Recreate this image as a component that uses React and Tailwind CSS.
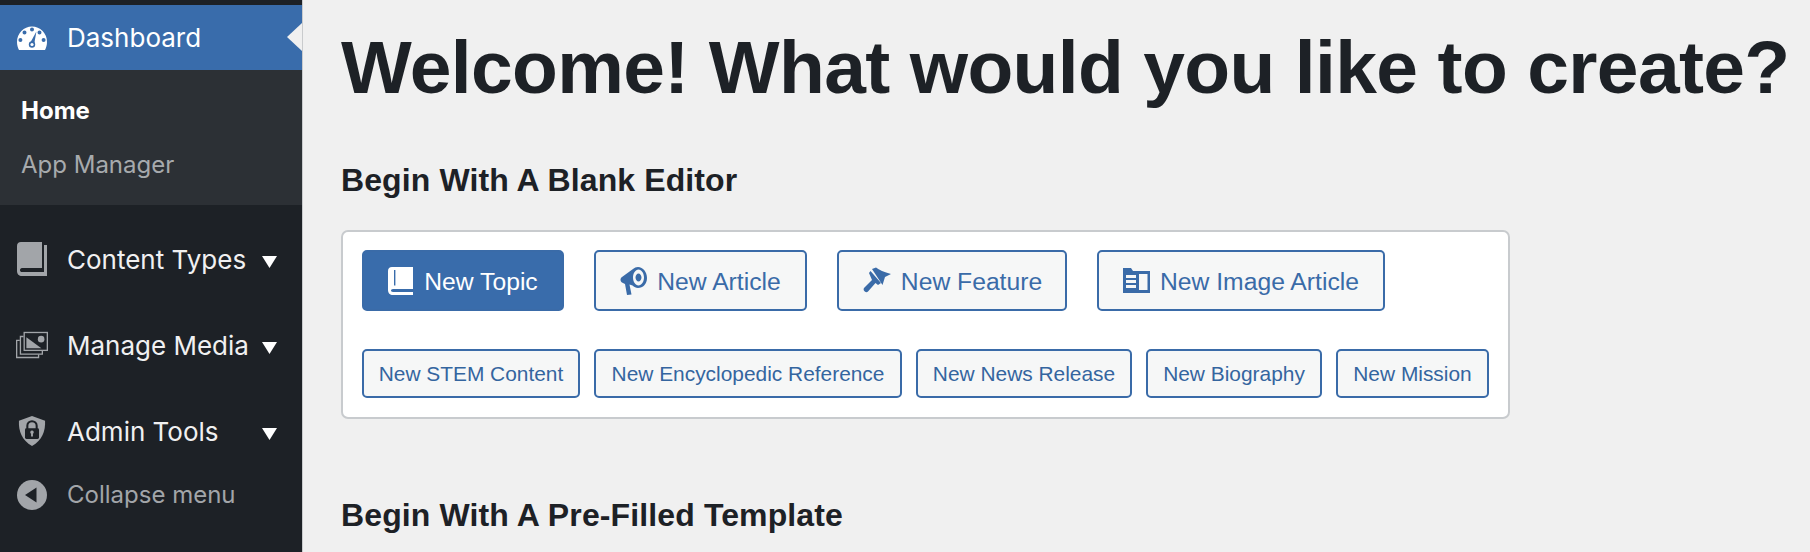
import React from "react";

const Gauge = () => (
  <svg viewBox="0 0 30 24" className="w-[30px] h-[24px] text-white">
    <path fill="currentColor" fillRule="evenodd" d="M0 16A15 15.5 0 0 1 30 16C30 19 29.2 21.6 28 24H2C.8 21.600 0 19 0 16ZM15 1.600a2 2 0 1 0 0 4 2 2 0 0 0 0-4ZM7.500 4.600a2 2 0 1 0 0 4 2 2 0 0 0 0-4ZM22.500 4.600a2 2 0 1 0 0 4 2 2 0 0 0 0-4ZM3.400 12a2 2 0 1 0 0 4 2 2 0 0 0 0-4ZM26.600 12a2 2 0 1 0 0 4 2 2 0 0 0 0-4Z" />
    <path d="M13.400 16.500 19.400 5.500 17.200 18Z" fill="#396cab" />
    <circle cx="15" cy="18.500" r="3.200" fill="#396cab" />
    <circle cx="15" cy="18.500" r="1.600" fill="#fff" />
  </svg>
);

const BookSide = () => (
  <svg viewBox="0 0 30 34" className="w-[30px] h-[34px] text-[#a2a5a9]">
    <path fill="currentColor" d="M4 0H25V26H5C3.800 26 3 27 3 28.200 3 29.400 3.800 30 5 30H27V3H30V34H5C2 34 0 32 0 29V4C0 1.500 1.500 0 4 0Z" />
  </svg>
);

const Images = () => (
  <svg viewBox="0 0 34 28" className="w-[34px] h-[28px] text-[#a2a5a9]">
    <g fill="none" stroke="currentColor" strokeWidth="1.400">
      <rect x="8.700" y=".7" width="24.600" height="19" />
      <path d="M8 5H4.700V23.700H28V20" />
      <path d="M4 9H.7V27.300H24V24" />
    </g>
    <path fill="currentColor" d="M11 5.700 27 17.500H11Z" />
    <circle cx="26.700" cy="7.800" r="3.500" fill="#a2a5a9" />
  </svg>
);

const Shield = () => (
  <svg viewBox="0 0 30 32" className="w-[28px] h-[30px] text-[#a2a5a9]">
    <path fill="currentColor" d="M15 0 29 5C29.500 16 26 26 15 32 4 26 .5 16 1 5Z" />
    <path fill="none" stroke="#1d2126" strokeWidth="2.200" d="M10 14V10.500a5 5 0 0 1 10 0V14" />
    <rect x="7.500" y="13" width="15" height="11.500" rx="1.500" fill="#1d2126" />
    <path fill="#a2a5a9" d="M15 15.500a1.900 1.900 0 0 1 1 3.500V22H14V19a1.900 1.900 0 0 1 1-3.500Z" />
  </svg>
);

const Collapse = () => (
  <svg viewBox="0 0 30 30" className="w-[30px] h-[30px]">
    <circle cx="15" cy="15" r="15" fill="#a2a5a9" />
    <path d="M19.500 7.500V22.500L8 15Z" fill="#1d2126" />
  </svg>
);

const Caret = () => (
  <svg viewBox="0 0 15 12" className="w-[15px] h-[12px] text-white ml-auto mr-[25px] mt-[5px]">
    <path d="M0 0H15L7.500 12Z" fill="currentColor" />
  </svg>
);

const BookBtn = () => (
  <svg viewBox="0 0 26 28" className="w-[26px] h-[28px] text-white">
    <path fill="currentColor" fillRule="evenodd" d="M4 0H25V22H5C3.600 22 3 22.800 3 23.600 3 24.500 3.600 25 5 25H25V28H5C2 28 0 26 0 23V4C0 1.500 1.500 0 4 0ZM6 3V18.500H7.400V3Z" />
  </svg>
);

const Megaphone = () => (
  <svg viewBox="0 0 27 28" className="w-[27px] h-[28px] text-[#3a6ba8]">
    <path fill="currentColor" fillRule="evenodd" d="M18 0C23 0 27 5 27 11 27 17 23 21 18 21 16 21 14 20 12.500 18.500L9.500 17.500 11.500 27.500 7 28 5 17 2 15.500C0 14.500 0 11 2 10L13 2C14.500 .8 16 0 18 0ZM18.500 2.500C15.500 2.500 13 6.300 13 10.500 13 14.700 15.500 18.500 18.500 18.500 21.500 18.500 24 14.700 24 10.500 24 6.300 21.500 2.500 18.500 2.500ZM18.500 6.500C20 6.500 21.500 8.300 21.500 10.500 21.500 12.700 20 14.500 18.500 14.500 17 14.500 15.500 12.700 15.500 10.500 15.500 8.300 17 6.500 18.500 6.500Z" />
  </svg>
);

const Hammer = () => (
  <svg viewBox="0 0 29 27" className="w-[29px] h-[27px] text-[#3a6ba8]">
    <path fill="currentColor" d="M10 2 14 .5C17 3 22 5 29 7L23 10 20.500 18Z" />
    <path fill="currentColor" d="M8.500 4 19 16 16 18 13.500 16 6 24.500C4 26.500 .5 23.500 2 21L10 13 7 6Z" />
  </svg>
);

const Doc = () => (
  <svg viewBox="0 0 27 25" className="w-[27px] h-[25px] text-[#3a6ba8]">
    <path fill="currentColor" fillRule="evenodd" d="M0 0H8L10 3H27V25H0ZM16 6V22H24.500V6ZM3 7V10H13V7ZM3 12V15H13V12ZM3 17V20H13V17Z" />
  </svg>
);

function SideItem({ icon, label, h = "h-[86px]", dim, caret }) {
  return (
    <div className={`flex items-center ${h} pl-[17px]`}>
      <span className="w-[32px] flex items-center justify-center shrink-0 -ml-[1px]">{icon}</span>
      <span className={`ml-[19px] ${dim ? "text-[24px] text-[#a2a5a9]" : "text-[26px] text-[#f0f0f1]"}`}>{label}</span>
      {caret && <Caret />}
    </div>
  );
}

function BigBtn({ icon, label, primary, w }) {
  return (
    <button className={`flex items-center justify-center gap-[10px] h-[61px] rounded-[5px] border-2 border-[#3a6ba8] text-[24.7px] ${w} ${primary ? "bg-[#396cab] text-white" : "bg-[#f6f7f7] text-[#3a6ba8]"}`}>
      {icon}
      <span className="pt-[2px]">{label}</span>
    </button>
  );
}

function SmallBtn({ label, w }) {
  return (
    <button className={`h-[49px] rounded-[5px] border-2 border-[#3a6ba8] bg-[#f6f7f7] text-[#34659f] text-[20.9px] ${w}`}>
      {label}
    </button>
  );
}

export default function App() {
  return (
    <div className="flex w-[1810px] h-[552px] overflow-hidden bg-[#f0f0f0] font-['Liberation_Sans',Arial,sans-serif]">
      <aside className="relative w-[303px] shrink-0 bg-[#1d2126] pt-[5px] border-r border-[#c9cbcd] font-['Inter',sans-serif]">
        <div className="relative flex items-center h-[65px] bg-[#396cab] pl-[17px]">
          <span className="w-[30px] shrink-0 flex"><Gauge /></span>
          <span className="ml-[20px] text-[26px] text-white">Dashboard</span>
          <span className="absolute right-0 top-[18px] w-0 h-0 border-y-[14px] border-y-transparent border-r-[15px] border-r-[#f0f0f0]" />
        </div>
        <div className="h-[135px] bg-[#2c3035] pl-[21px] pt-[21px]">
          <div className="h-[40px] flex items-center text-[24px] font-bold text-white">Home</div>
          <div className="h-[40px] mt-[14px] flex items-center text-[24px] text-[#a7aaad]">App Manager</div>
        </div>
        <div className="pt-[11px]">
          <SideItem icon={<BookSide />} label="Content Types" caret />
          <SideItem icon={<Images />} label="Manage Media" caret />
          <SideItem icon={<Shield />} label="Admin Tools" caret />
          <SideItem icon={<Collapse />} label="Collapse menu" h="h-[42px]" dim />
        </div>
      </aside>
      <main className="flex-1 pl-[38px] pt-[30px] text-[#1d2126] min-w-0">
        <h1 className="text-[75px] leading-none font-bold whitespace-nowrap tracking-[-0.65px]">Welcome! What would you like to create?</h1>
        <h2 className="mt-[57px] text-[32px] leading-[36px] font-bold tracking-[0.1px]">Begin With A Blank Editor</h2>
        <section className="mt-[32px] w-[1169px] h-[189px] bg-white border-2 border-[#c8cbce] rounded-[7px] pl-[19px] pt-[18px]">
          <div className="flex gap-[30px]">
            <BigBtn primary icon={<BookBtn />} label="New Topic" w="w-[202px]" />
            <BigBtn icon={<Megaphone />} label="New Article" w="w-[213px]" />
            <BigBtn icon={<Hammer />} label="New Feature" w="w-[230px]" />
            <BigBtn icon={<Doc />} label="New Image Article" w="w-[288px]" />
          </div>
          <div className="flex gap-[14px] mt-[38px]">
            <SmallBtn label="New STEM Content" w="w-[218px]" />
            <SmallBtn label="New Encyclopedic Reference" w="w-[308px]" />
            <SmallBtn label="New News Release" w="w-[216px]" />
            <SmallBtn label="New Biography" w="w-[176px]" />
            <SmallBtn label="New Mission" w="w-[153px]" />
          </div>
        </section>
        <h2 className="mt-[78px] text-[32px] leading-[36px] font-bold tracking-[0.12px]">Begin With A Pre-Filled Template</h2>
      </main>
    </div>
  );
}
